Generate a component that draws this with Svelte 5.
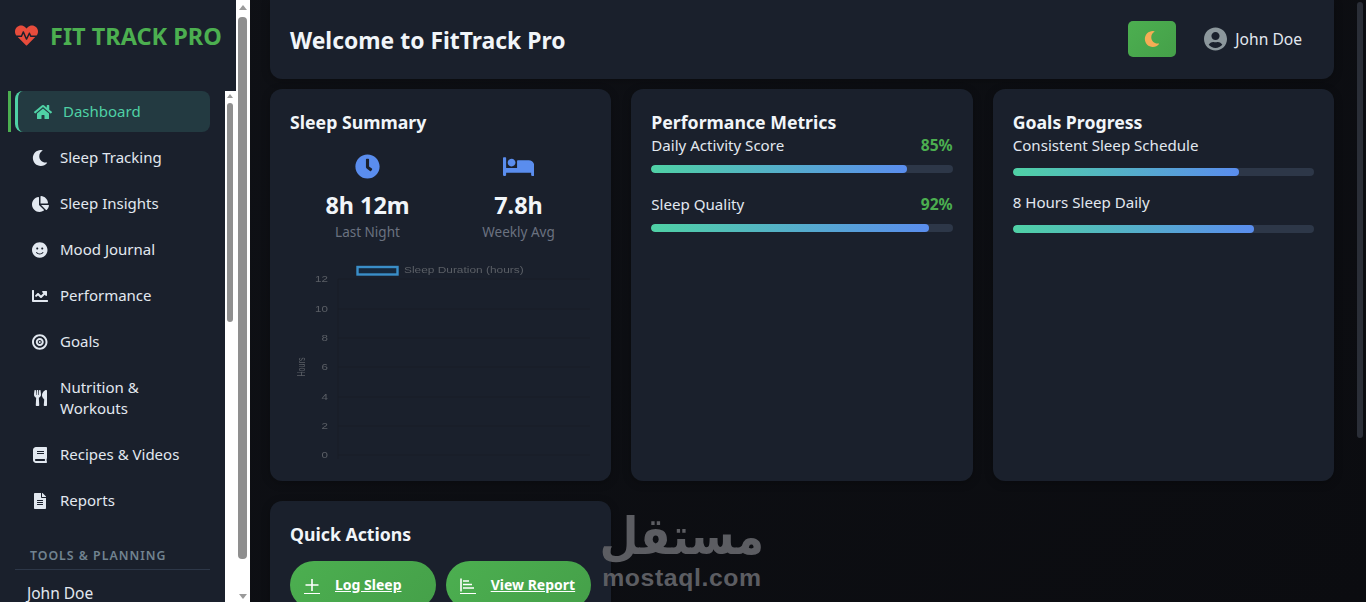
<script>
  const ic = {
    home: ['0 0 576 512', 'M280.37 148.26L96 300.11V464a16 16 0 0 0 16 16l112.06-.29a16 16 0 0 0 15.92-16V368a16 16 0 0 1 16-16h64a16 16 0 0 1 16 16v95.64a16 16 0 0 0 16 16.05L464 480a16 16 0 0 0 16-16V300L295.67 148.26a12.19 12.19 0 0 0-15.3 0zM571.6 251.47L488 182.56V44.05a12 12 0 0 0-12-12h-56a12 12 0 0 0-12 12v72.61L318.47 43a48 48 0 0 0-61 0L4.34 251.47a12 12 0 0 0-1.6 16.9l25.5 31A12 12 0 0 0 45.15 301l235.22-193.74a12.19 12.19 0 0 1 15.3 0L530.9 301a12 12 0 0 0 16.9-1.6l25.5-31a12 12 0 0 0-1.7-16.93z'],
    moon: ['0 0 512 512', 'M283.211 512c78.962 0 151.079-35.925 198.857-94.792 7.068-8.708-.639-21.43-11.562-19.35-124.203 23.654-238.262-71.576-238.262-196.954 0-72.222 38.662-138.635 101.498-174.394 9.686-5.512 7.25-20.197-3.756-22.23A258.156 258.156 0 0 0 283.211 0c-141.309 0-256 114.511-256 256 0 141.309 114.511 256 256 256z'],
    pie: ['0 0 544 512', 'M527.79 288H290.5l158.03 158.03c6.04 6.04 15.98 6.53 22.19.68 38.7-36.46 65.32-85.61 73.13-140.86 1.34-9.46-6.51-17.85-16.06-17.85zm-15.83-64.8C503.72 103.74 408.26 8.28 288.8.04 279.68-.59 272 7.1 272 16.24V240h223.77c9.14 0 16.82-7.68 16.19-16.8zM224 288V50.71c0-9.55-8.39-17.4-17.84-16.06C86.99 51.49-4.1 155.6.14 280.37 4.5 408.51 114.83 513.59 243.03 511.98c50.4-.63 96.97-16.87 135.26-44.03 7.9-5.6 8.42-17.23 1.57-24.08L224 288z'],
    smile: ['0 0 496 512', 'M248 8C111 8 0 119 0 256s111 248 248 248 248-111 248-248S385 8 248 8zm80 168c17.7 0 32 14.3 32 32s-14.3 32-32 32-32-14.3-32-32 14.3-32 32-32zm-160 0c17.7 0 32 14.3 32 32s-14.3 32-32 32-32-14.3-32-32 14.3-32 32-32zm194.8 170.2C334.3 380.4 292.5 400 248 400s-86.3-19.6-114.8-53.8c-13.6-16.3 11-36.7 24.6-20.5 22.4 26.9 55.2 42.2 90.2 42.2s67.8-15.4 90.2-42.2c13.4-16.2 38.1 4.2 24.6 20.5z'],
    line: ['0 0 512 512', 'M496 384H64V80c0-8.84-7.16-16-16-16H16C7.16 64 0 71.16 0 80v336c0 17.67 14.33 32 32 32h464c8.84 0 16-7.16 16-16v-32c0-8.84-7.16-16-16-16zM464 96H345.94c-21.38 0-32.09 25.85-16.97 40.97l32.4 32.4L288 242.75l-73.37-73.37c-12.5-12.5-32.76-12.5-45.25 0l-68.69 68.69c-6.25 6.25-6.25 16.38 0 22.63l22.62 22.62c6.25 6.25 16.38 6.25 22.63 0L192 237.25l73.37 73.37c12.5 12.5 32.76 12.5 45.25 0l96-96 32.4 32.4c15.12 15.12 40.97 4.41 40.97-16.97V112c.01-8.84-7.15-16-15.99-16z'],
    target: ['0 0 496 512', 'M248 8C111.03 8 0 119.03 0 256s111.03 248 248 248 248-111.03 248-248S384.97 8 248 8zm0 432c-101.69 0-184-82.29-184-184 0-101.69 82.29-184 184-184 101.69 0 184 82.29 184 184 0 101.69-82.29 184-184 184zm0-312c-70.69 0-128 57.31-128 128s57.31 128 128 128 128-57.31 128-128-57.31-128-128-128zm0 192c-35.29 0-64-28.71-64-64s28.71-64 64-64 64 28.71 64 64-28.71 64-64 64zM248 224a32 32 0 1 0 0 64 32 32 0 1 0 0-64z'],
    food: ['0 0 416 512', 'M207.9 15.2c.8 4.7 16.1 94.5 16.1 128.8 0 52.3-27.8 89.6-68.9 104.6L168 486.7c.7 13.7-10.2 25.3-24 25.3H80c-13.7 0-24.7-11.5-24-25.3l12.9-238.1C27.7 233.6 0 196.2 0 144 0 109.6 15.3 19.9 16.1 15.2 19.3-5.1 61.4-5.4 64 16.3v141.2c1.3 3.4 15.1 3.2 16 0 1.4-25.3 7.9-139.2 8-141.8 3.3-20.8 44.7-20.8 47.9 0 .2 2.7 6.6 116.5 8 141.8.9 3.2 14.8 3.4 16 0V16.3c2.6-21.6 44.8-21.4 48-1.1zm119.2 285.7l-15 185.1c-1.2 14 9.9 26 23.9 26h56c13.3 0 24-10.7 24-24V24c0-13.2-10.7-24-24-24-82.5 0-221.4 178.5-64.9 300.9z'],
    book: ['0 0 448 512', 'M448 360V24c0-13.3-10.7-24-24-24H96C43 0 0 43 0 96v320c0 53 43 96 96 96h328c13.3 0 24-10.7 24-24v-16c0-7.5-3.5-14.3-8.9-18.7-4.2-15.4-4.2-59.3 0-74.7 5.4-4.3 8.9-11.1 8.9-18.6zM128 134c0-3.3 2.7-6 6-6h212c3.3 0 6 2.7 6 6v20c0 3.3-2.7 6-6 6H134c-3.3 0-6-2.7-6-6v-20zm0 64c0-3.3 2.7-6 6-6h212c3.3 0 6 2.7 6 6v20c0 3.3-2.7 6-6 6H134c-3.3 0-6-2.7-6-6v-20zm253.4 250H96c-17.7 0-32-14.3-32-32 0-17.6 14.4-32 32-32h285.4c-1.9 17.1-1.9 46.9 0 64z'],
    file: ['0 0 384 512', 'M224 136V0H24C10.7 0 0 10.7 0 24v464c0 13.3 10.7 24 24 24h336c13.3 0 24-10.7 24-24V160H248c-13.2 0-24-10.8-24-24zm64 236c0 6.6-5.4 12-12 12H108c-6.6 0-12-5.4-12-12v-8c0-6.6 5.4-12 12-12h168c6.6 0 12 5.4 12 12v8zm0-64c0 6.6-5.4 12-12 12H108c-6.6 0-12-5.4-12-12v-8c0-6.6 5.4-12 12-12h168c6.6 0 12 5.4 12 12v8zm0-72v8c0 6.6-5.4 12-12 12H108c-6.6 0-12-5.4-12-12v-8c0-6.6 5.4-12 12-12h168c6.6 0 12 5.4 12 12zm96-114.1v6.1H256V0h6.1c6.4 0 12.5 2.5 17 7l97.9 98c4.5 4.5 7 10.6 7 16.9z'],
    heart: ['0 0 512 512', 'M320.2 243.8l-49.7 99.4c-6 12.1-23.4 11.7-28.9-.6l-56.9-126.3-30 71.7H60.6l182.5 186.5c7.1 7.3 18.6 7.3 25.7 0L451.4 288H342.3l-22.1-44.2zM473.7 73.9l-2.4-2.5c-51.5-52.6-135.8-52.6-187.4 0L256 100l-27.9-28.5c-51.5-52.7-135.9-52.7-187.4 0l-2.4 2.4C-10.4 123.7-12.5 203 31 256h102.4l35.9-86.2c5.4-12.9 23.6-13.2 29.4-.4l58.2 129.3 49-97.9c5.9-11.8 22.7-11.8 28.6 0l27.6 55.2H481c43.5-53 41.4-132.3-7.3-182.1z'],
    clock: ['0 0 512 512', 'M256,8C119,8,8,119,8,256S119,504,256,504,504,393,504,256,393,8,256,8Zm92.49,313h0l-20,25a16,16,0,0,1-22.49,2.5h0l-67-49.72a40,40,0,0,1-15-31.23V112a16,16,0,0,1,16-16h32a16,16,0,0,1,16,16V256l58,42.5A16,16,0,0,1,348.49,321Z'],
    bed: ['0 0 640 512', 'M176 256c44.11 0 80-35.89 80-80s-35.89-80-80-80-80 35.89-80 80 35.89 80 80 80zm352-128H304c-8.84 0-16 7.16-16 16v144H64V80c0-8.84-7.16-16-16-16H16C7.16 64 0 71.16 0 80v352c0 8.84 7.16 16 16 16h32c8.84 0 16-7.16 16-16v-48h512v48c0 8.84 7.16 16 16 16h32c8.84 0 16-7.16 16-16V240c0-61.86-50.14-112-112-112z'],
    user: ['0 0 496 512', 'M248 8C111 8 0 119 0 256s111 248 248 248 248-111 248-248S385 8 248 8zm0 96c48.6 0 88 39.4 88 88s-39.4 88-88 88-88-39.4-88-88 39.4-88 88-88zm0 344c-58.7 0-111.3-26.6-146.5-68.2 18.8-35.4 55.6-59.8 98.5-59.8 2.4 0 4.8.4 7.1 1.1 13 4.2 26.6 6.9 40.9 6.9 14.3 0 28-2.7 40.9-6.9 2.3-.7 4.7-1.1 7.1-1.1 42.9 0 79.7 24.4 98.5 59.8C359.3 421.4 306.7 448 248 448z']
  };
  const nav = [
    ['home', 'Dashboard', true], ['moon', 'Sleep Tracking'], ['pie', 'Sleep Insights'], ['smile', 'Mood Journal'],
    ['line', 'Performance'], ['target', 'Goals'], ['food', 'Nutrition & Workouts'], ['book', 'Recipes & Videos'], ['file', 'Reports']
  ];
  const ticks = [[12, 278], [10, 308], [8, 337], [6, 366], [4, 396], [2, 425], [0, 454]];
</script>

{#snippet icon(name, cls)}
  <svg class={cls} viewBox={ic[name][0]} aria-hidden="true"><path d={ic[name][1]} fill="currentColor" /></svg>
{/snippet}

<div class="page">
  <aside class="sidebar">
    <div class="brand">
      {@render icon('heart', 'brand-icon')}
      <span>FIT TRACK PRO</span>
    </div>
    <nav class="nav">
      {#each nav as [i, label, active]}
        <a class="item" class:active href="#/">
          <span class="item-icon">{@render icon(i, 'nav-svg')}</span>
          <span class="item-label">{label}</span>
        </a>
      {/each}
      <div class="section">TOOLS &amp; PLANNING</div>
      <div class="account">John Doe</div>
    </nav>
    <div class="inner-scroll"><i class="up"></i><b></b></div>
  </aside>
  <div class="outer-scroll"><i class="up"></i><b></b><i class="down"></i></div>

  <main class="main">
    <header class="top card">
      <h1>Welcome to FitTrack Pro</h1>
      <button class="theme">{@render icon('moon', 'theme-svg')}</button>
      <div class="user">{@render icon('user', 'user-svg')}<span>John Doe</span></div>
    </header>

    <section class="grid">
      <article class="card tall">
        <h2>Sleep Summary</h2>
        <div class="stats">
          <div class="stat">{@render icon('clock', 'stat-svg')}<strong>8h 12m</strong><small>Last Night</small></div>
          <div class="stat">{@render icon('bed', 'stat-svg')}<strong>7.8h</strong><small>Weekly Avg</small></div>
        </div>
        <svg class="chart" viewBox="0 0 301 208" role="img">
          <g transform="translate(-290,-264)">
            <rect x="357.5" y="266" width="40" height="7.5" fill="#16283c" stroke="#3a8ec8" stroke-width="2.4" />
            <text transform="translate(404,272) scale(1,.8)" class="legend">Sleep Duration (hours)</text>
            {#each ticks as [v, y]}
              <text transform="translate(328,{y + 3}) scale(1,.8)" class="tick" text-anchor="end">{v}</text>
              <line x1="338" x2="590" y1={y} y2={y} stroke="#181d27" />
            {/each}
            <line x1="338" x2="338" y1="278" y2="458" stroke="#181d27" />
            <text transform="translate(305,366) rotate(-90) scale(.62,1)" text-anchor="middle" class="tick">Hours</text>
          </g>
        </svg>
      </article>

      <article class="card tall">
        <h2>Performance Metrics</h2>
        <div class="metric">
          <div class="row"><span>Daily Activity Score</span><em>85%</em></div>
          <div class="track"><div class="fill" style="width:85%"></div></div>
        </div>
        <div class="metric">
          <div class="row"><span>Sleep Quality</span><em>92%</em></div>
          <div class="track"><div class="fill" style="width:92%"></div></div>
        </div>
      </article>

      <article class="card tall">
        <h2>Goals Progress</h2>
        <div class="metric goal">
          <div class="row"><span>Consistent Sleep Schedule</span></div>
          <div class="track"><div class="fill" style="width:75%"></div></div>
        </div>
        <div class="metric goal">
          <div class="row"><span>8 Hours Sleep Daily</span></div>
          <div class="track"><div class="fill" style="width:80%"></div></div>
        </div>
      </article>

      <article class="card quick">
        <h2>Quick Actions</h2>
        <div class="actions">
          <a class="btn" href="#/">
            <svg class="btn-svg" viewBox="0 0 16 16"><path d="M8 2v12M1.5 8h13" stroke="currentColor" stroke-width="1.6" fill="none" /></svg>
            <span>Log Sleep</span>
          </a>
          <a class="btn" href="#/">
            <svg class="btn-svg" viewBox="0 0 16 16"><path d="M1 1.5v13M3 4h6M3 7.5h9M3 11h11" stroke="currentColor" stroke-width="1.6" fill="none" /></svg>
            <span>View Report</span>
          </a>
        </div>
      </article>
    </section>

    <div class="mark" aria-hidden="true">
      <div class="mark-ar" lang="ar" dir="rtl">مستقل</div>
      <div class="mark-en">mostaql.com</div>
    </div>
  </main>
  <div class="page-scroll"><b></b></div>
</div>

<style>
  :global(body) { margin: 0; background: #0d0f14; }
  .page {
    display: flex; width: 1366px; height: 602px; overflow: hidden;
    font-family: "Noto Sans", "Open Sans", sans-serif; color: #e2e8f0;
    background: linear-gradient(135deg, #0f1116, #0b0c10);
  }
  .sidebar { position: relative; width: 236px; flex: none; background: #1a202c; overflow: hidden; }
  .brand { display: flex; align-items: flex-start; gap: 12px; padding: 20px 0 0 15px; height: 70px; box-sizing: border-box; color: #4caf50; font-weight: 700; font-size: 23.5px; line-height: 32px; white-space: nowrap; }
  .brand-icon { width: 23px; height: 23px; color: #e74c3c; flex: none; margin-top: 4px; }
  .nav { display: flex; flex-direction: column; width: 195px; margin-left: 15px; padding-top: 21px; }
  .item { position: relative; display: flex; align-items: center; gap: 10px; padding: 10px 15px; margin-bottom: 5px; color: #e2e8f0; text-decoration: none; font-size: 15px; line-height: 21px; border-radius: 8px; box-sizing: border-box; }
  .active { background: #233a41; color: #4fd1a5; border-left: 3px solid #4fd1a5; }
  .active::before { content: ""; position: absolute; left: -10px; top: 0; bottom: 0; width: 3px; background: #4caf50; }
  .item-icon { width: 20px; flex: none; display: flex; justify-content: center; }
  .nav-svg { height: 16px; width: auto; display: block; }
  .section { margin-top: 20px; padding: 0 15px 5px; height: 24px; box-sizing: border-box; border-bottom: 1px solid #2d3748; color: #718390; font-size: 12.3px; line-height: 19px; font-weight: 600; letter-spacing: 1px; white-space: nowrap; }
  .account { margin: 13px 0 0 12px; font-size: 15.5px; line-height: 21px; }
  .inner-scroll { position: absolute; right: 0; top: 91px; bottom: 0; width: 11px; background: #fff; }
  .inner-scroll b { position: absolute; left: 2px; top: 12px; width: 6px; height: 219px; background: #8f8f8f; border-radius: 3px; }
  .inner-scroll .up { position: absolute; left: 2px; top: 3px; border: 3.5px solid transparent; border-top: 0; border-bottom: 4px solid #9a9a9a; }
  .outer-scroll { position: relative; width: 14px; flex: none; background: #fff; }
  .outer-scroll b { position: absolute; left: 2px; top: 17px; width: 9px; height: 542px; background: #8f8f8f; border-radius: 4px; }
  .outer-scroll .up { position: absolute; left: 3px; top: 5px; border: 4px solid transparent; border-top: 0; border-bottom: 5px solid #9a9a9a; }
  .outer-scroll .down { position: absolute; left: 3px; bottom: 3px; border: 4px solid transparent; border-bottom: 0; border-top: 5px solid #9a9a9a; }

  .main { position: relative; flex: 1; min-width: 0; padding: 0 16px 0 20px; }
  .card { background: #1a202c; border-radius: 12px; box-shadow: 0 2px 8px rgba(0,0,0,.25); box-sizing: border-box; }
  .top { height: 79px; padding: 0 32px 0 20px; display: flex; align-items: center; border-top-left-radius: 0; border-top-right-radius: 0; }
  h1 { flex: 1; margin: 2px 0 0; font-size: 22.9px; line-height: 32px; font-weight: 700; color: #f1f5f9; }
  .theme { width: 48px; height: 36px; padding: 0; border: 0; border-radius: 5px; background: linear-gradient(135deg, #4caf50, #45a049); display: flex; align-items: center; justify-content: center; color: #f6ad55; margin: -1px 28px 0 0; }
  .theme-svg { width: 16px; height: 16px; }
  .user { display: flex; align-items: center; gap: 8px; font-size: 15.6px; line-height: 21px; margin-top: -1px; }
  .user span { padding-top: 1px; }
  .user-svg { width: 23px; height: 24px; color: #8c979c; }

  .grid { display: grid; grid-template-columns: repeat(3, minmax(0, 1fr)); gap: 20px; margin-top: 10px; }
  .tall { height: 392px; padding: 20px; }
  h2 { margin: 0; font-size: 17.7px; line-height: 26px; font-weight: 700; color: #f1f5f9; }
  .stats { display: grid; grid-template-columns: 151px 151px; margin: 6px 0 0 2px; }
  .stat { display: flex; flex-direction: column; align-items: center; }
  .stat-svg { height: 25px; width: auto; color: #5a8dee; margin-top: 13px; }
  .stat strong { margin-top: 11px; font-size: 23.4px; line-height: 30px; font-weight: 700; color: #f1f5f9; }
  .stat small { margin-top: 2px; font-size: 13.5px; line-height: 20px; color: #6b7280; }
  .chart { display: block; width: 301px; height: 208px; margin-top: 23px; filter: blur(.35px); }
  .legend { font: 11.9px "Liberation Sans", sans-serif; fill: #5b5f66; }
  .tick { font: 11.6px "Liberation Sans", sans-serif; fill: #5b5f66; }

  .metric { margin-bottom: 21px; }
  .metric.goal { margin-bottom: 16px; }
  .row { display: flex; justify-content: space-between; font-size: 15.1px; line-height: 20px; margin-bottom: 10px; }
  .goal .row { margin-bottom: 13px; }
  .row em { font-style: normal; font-weight: 700; font-size: 15.6px; color: #4caf50; }
  .track { height: 8px; border-radius: 4px; background: #2d3748; overflow: hidden; }
  .fill { height: 100%; border-radius: 4px; background: linear-gradient(90deg, #4fd1a5, #5a8dee); }

  .quick { height: 160px; padding: 20px; }
  .actions { display: flex; gap: 10px; margin-top: 14px; }
  .btn { display: flex; align-items: center; gap: 15px; height: 48px; padding: 0 0 0 14px; flex: 1; box-sizing: border-box; border-radius: 24px; background: linear-gradient(135deg, #4caf50, #45a049); color: #fff; font-size: 14px; line-height: 20px; font-weight: 700; text-decoration: underline; white-space: nowrap; }
  .btn-svg { width: 16px; height: 16px; border-bottom: 1.5px solid #fff; flex: none; }
  .mark { position: absolute; left: 352px; top: 515px; width: 160px; color: #5c5d62; text-align: center; pointer-events: none; }
  .mark-ar { font: 700 45px/44px "DejaVu Sans", sans-serif; transform: translateX(2px) scale(1, 1.15); white-space: nowrap; margin-bottom: 6px; }
  .mark-en { font: 700 24.8px/26px "Liberation Sans", sans-serif; letter-spacing: .6px; white-space: nowrap; }
  .page-scroll { position: relative; width: 16px; flex: none; }
  .page-scroll b { position: absolute; left: 7px; top: 2px; width: 6px; height: 436px; border-radius: 3px; background: #2a2e37; }
</style>
